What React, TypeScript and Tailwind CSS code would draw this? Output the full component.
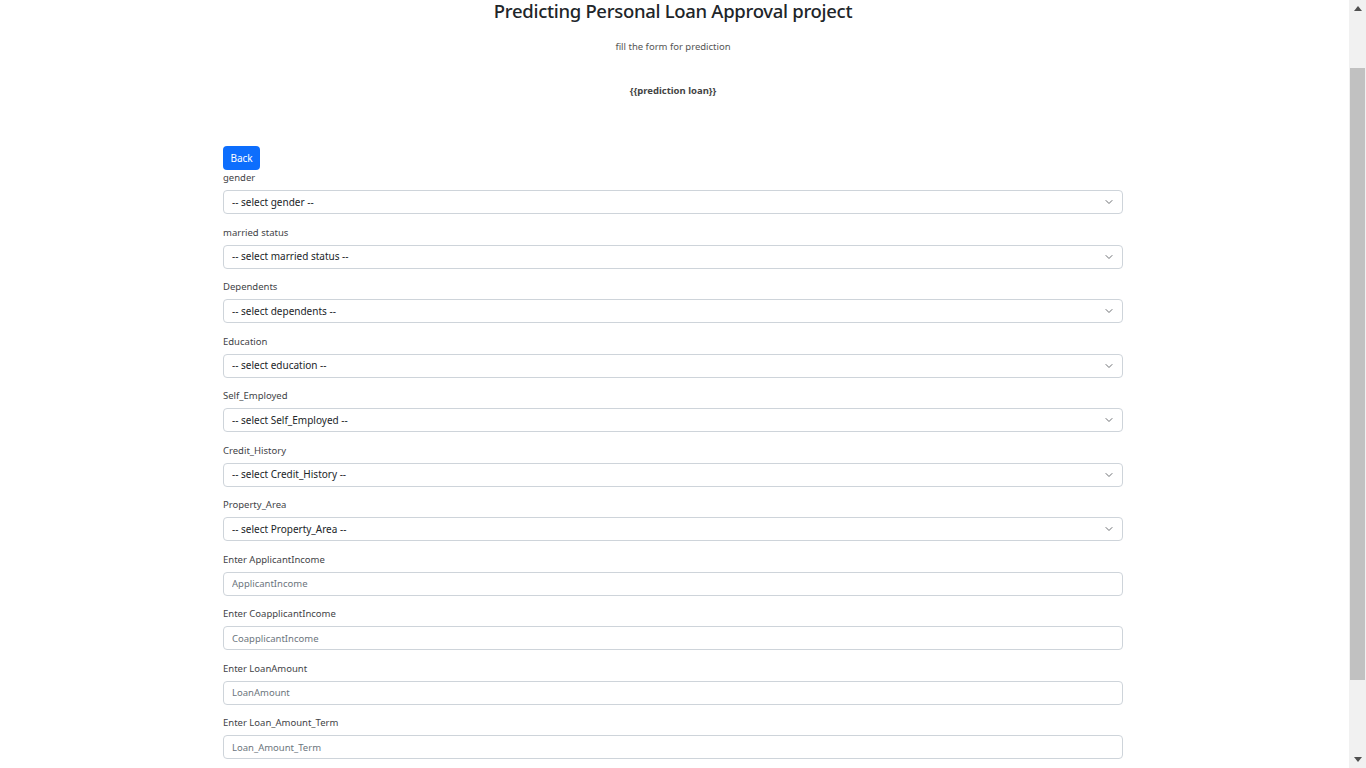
import { ReactNode } from "react";

const selects = [
  { label: "gender", placeholder: "-- select gender --" },
  { label: "married status", placeholder: "-- select married status --" },
  { label: "Dependents", placeholder: "-- select dependents --" },
  { label: "Education", placeholder: "-- select education --" },
  { label: "Self_Employed", placeholder: "-- select Self_Employed --" },
  { label: "Credit_History", placeholder: "-- select Credit_History --" },
  { label: "Property_Area", placeholder: "-- select Property_Area --" },
];

const inputs = [
  "ApplicantIncome",
  "CoapplicantIncome",
  "LoanAmount",
  "Loan_Amount_Term",
];

function Field({ label, children }: { label: string; children: ReactNode }) {
  return (
    <div className="mb-[10.5px]">
      <label className="block text-[9.5px] leading-[15px] text-[#3f4347] mb-[5px]">
        {label}
      </label>
      {children}
    </div>
  );
}

function Chevron() {
  return (
    <svg
      width="8"
      height="8"
      viewBox="0 0 16 16"
      className="absolute right-[10px] top-[8px] pointer-events-none"
    >
      <path
        d="m2 5 6 6 6-6"
        fill="none"
        stroke="#6c6f73"
        strokeWidth="2"
        strokeLinecap="round"
        strokeLinejoin="round"
      />
    </svg>
  );
}

export default function App() {
  return (
    <div className="h-[768px] w-[1366px] flex overflow-hidden bg-white font-['Noto_Sans',sans-serif] text-[#212529]">
      <main className="flex-1 overflow-hidden">
        <div className="w-[900px] ml-[223px]">
          <h1 className="text-center text-[18.5px] leading-[22px] tracking-[-0.3px] font-medium text-[#212529]">
            Predicting Personal Loan Approval project
          </h1>
          <p className="text-center text-[9.5px] leading-[15px] text-[#555] mt-[16.5px]">
            fill the form for prediction
          </p>
          <p className="text-center text-[9.5px] leading-[15px] font-bold text-[#444] mt-[29px]">
            {"{{prediction loan}}"}
          </p>
          <button className="mt-[48.5px] block h-[24px] w-[37px] rounded-[4px] bg-[#0d6efd] text-white text-[10px] leading-[24px]">
            Back
          </button>
          <form>
            {selects.map((s) => (
              <Field key={s.label} label={s.label}>
                <div className="relative">
                  <select
                    defaultValue=""
                    className="block appearance-none w-full h-[24px] rounded-[4px] border border-[#ced4da] bg-white pl-[8px] text-[10px] text-[#212529] outline-none"
                  >
                    <option value="" disabled>
                      {s.placeholder}
                    </option>
                  </select>
                  <Chevron />
                </div>
              </Field>
            ))}
            {inputs.map((name) => (
              <Field key={name} label={"Enter " + name}>
                <input
                  placeholder={name}
                  className="block w-full h-[24px] rounded-[4px] border border-[#ced4da] bg-white px-[8px] text-[9.5px] placeholder:text-[#6c757d] outline-none"
                />
              </Field>
            ))}
          </form>
        </div>
      </main>
      <div className="w-[17px] h-full bg-[#f1f1f1] flex flex-col items-center">
        <div className="h-[17px] flex items-center justify-center">
          <svg width="8" height="5" viewBox="0 0 8 5">
            <path d="M0 5 4 0 8 5z" fill="#505050" />
          </svg>
        </div>
        <div className="mt-[51px] h-[612px] w-[15px] bg-[#c1c1c1]" />
        <div className="flex-1" />
        <div className="h-[17px] flex items-center justify-center">
          <svg width="8" height="5" viewBox="0 0 8 5">
            <path d="M0 0 4 5 8 0z" fill="#505050" />
          </svg>
        </div>
      </div>
    </div>
  );
}
